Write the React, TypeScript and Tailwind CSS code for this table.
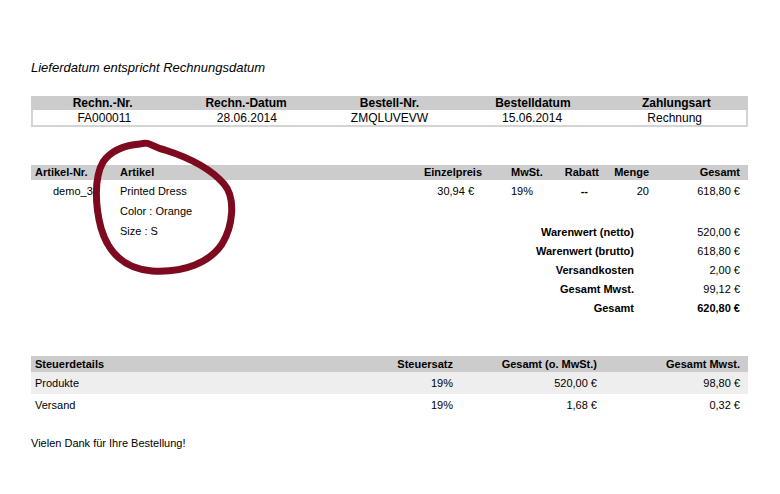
import React from "react";

const font = { fontFamily: '"Liberation Sans", Arial, sans-serif' };

function HeaderTable() {
  const heads = ["Rechn.-Nr.", "Rechn.-Datum", "Bestell-Nr.", "Bestelldatum", "Zahlungsart"];
  const vals = ["FA000011", "28.06.2014", "ZMQLUVEVW", "15.06.2014", "Rechnung"];
  return (
    <div className="mt-[20px] w-[717px] text-[12px] leading-[14px]">
      <div className="grid grid-cols-5 bg-[#cccccc] h-[14px] font-bold">
        {heads.map((h) => (
          <div key={h} className="text-center">
            {h}
          </div>
        ))}
      </div>
      <div className="grid grid-cols-5 h-[17px] border-2 border-t-0 border-[#d4d4d4] pt-[1px]">
        {vals.map((v) => (
          <div key={v} className="text-center">
            {v}
          </div>
        ))}
      </div>
    </div>
  );
}

function ItemTable() {
  const totals = [
    ["Warenwert (netto)", "520,00 €"],
    ["Warenwert (brutto)", "618,80 €"],
    ["Versandkosten", "2,00 €"],
    ["Gesamt Mwst.", "99,12 €"],
    ["Gesamt", "620,80 €"],
  ];
  return (
    <div className="mt-[38px] w-[717px] text-[11px] leading-[13px]">
      <div className="flex h-[15px] items-center bg-[#cccccc] font-bold">
        <div className="w-[89px] pl-[4px]">Artikel-Nr.</div>
        <div className="w-[280px]">Artikel</div>
        <div className="w-[82px] text-right">Einzelpreis</div>
        <div className="w-[29px]" />
        <div className="w-[50px]">MwSt.</div>
        <div className="w-[38px] text-right">Rabatt</div>
        <div className="w-[50px] text-right">Menge</div>
        <div className="flex-1 pr-[8px] text-right">Gesamt</div>
      </div>
      <div className="flex pt-[5px]">
        <div className="w-[89px] pl-[22px]">demo_3</div>
        <div className="flex w-[280px] flex-col gap-[7px]">
          <div>Printed Dress</div>
          <div>Color : Orange</div>
          <div>Size : S</div>
        </div>
        <div className="w-[74px] text-right">30,94 €</div>
        <div className="w-[37px]" />
        <div className="w-[50px]">19%</div>
        <div className="w-[27px] text-right font-bold">--</div>
        <div className="w-[61px] text-right">20</div>
        <div className="flex-1 pr-[8px] text-right">618,80 €</div>
      </div>
      <div className="-mt-[12px] flex flex-col gap-[6px]">
        {totals.map(([l, v], i) => (
          <div key={l} className="flex">
            <div className="w-[603px] text-right font-bold">{l}</div>
            <div className={`flex-1 pr-[8px] text-right ${i === 4 ? "font-bold" : ""}`}>{v}</div>
          </div>
        ))}
      </div>
    </div>
  );
}

function TaxTable() {
  const rows = [
    ["Produkte", "19%", "520,00 €", "98,80 €"],
    ["Versand", "19%", "1,68 €", "0,32 €"],
  ];
  return (
    <div className="mt-[41px] w-[717px] text-[11px] leading-[13px]">
      <div className="flex h-[16px] items-center bg-[#cccccc] font-bold">
        <div className="w-[300px] pl-[4px]">Steuerdetails</div>
        <div className="w-[122px] text-right">Steuersatz</div>
        <div className="w-[144px] text-right">Gesamt (o. MwSt.)</div>
        <div className="flex-1 pr-[8px] text-right">Gesamt Mwst.</div>
      </div>
      {rows.map((r, i) => (
        <div key={r[0]} className={`flex h-[22px] items-center ${i === 0 ? "bg-[#eeeeee]" : ""}`}>
          <div className="w-[300px] pl-[4px]">{r[0]}</div>
          <div className="w-[122px] text-right">{r[1]}</div>
          <div className="w-[144px] text-right">{r[2]}</div>
          <div className="flex-1 pr-[8px] text-right">{r[3]}</div>
        </div>
      ))}
    </div>
  );
}

export default function App() {
  return (
    <div className="relative h-[494px] w-[780px] overflow-hidden bg-white text-black" style={font}>
      <div className="pl-[31px] pt-[60px]">
        <div className="text-[13px] italic leading-[16px]">Lieferdatum entspricht Rechnungsdatum</div>
        <HeaderTable />
        <ItemTable />
        <TaxTable />
        <div className="mt-[21px] text-[11px] leading-[13px]">Vielen Dank für Ihre Bestellung!</div>
      </div>
      <svg className="pointer-events-none absolute left-0 top-0" width="780" height="494">
        <path
          d="M 140 144 C 150 141, 152 147, 165 150 C 190 158, 212 170, 224 184 C 236 198, 233 226, 222 244 C 210 262, 185 273, 152 271 C 124 269, 108 252, 101 228 C 95 205, 94 178, 103 162 C 112 149, 128 145, 140 144"
          fill="none"
          stroke="#7d0a1e"
          strokeWidth="7"
          strokeLinecap="round"
          strokeLinejoin="round"
        />
      </svg>
    </div>
  );
}
